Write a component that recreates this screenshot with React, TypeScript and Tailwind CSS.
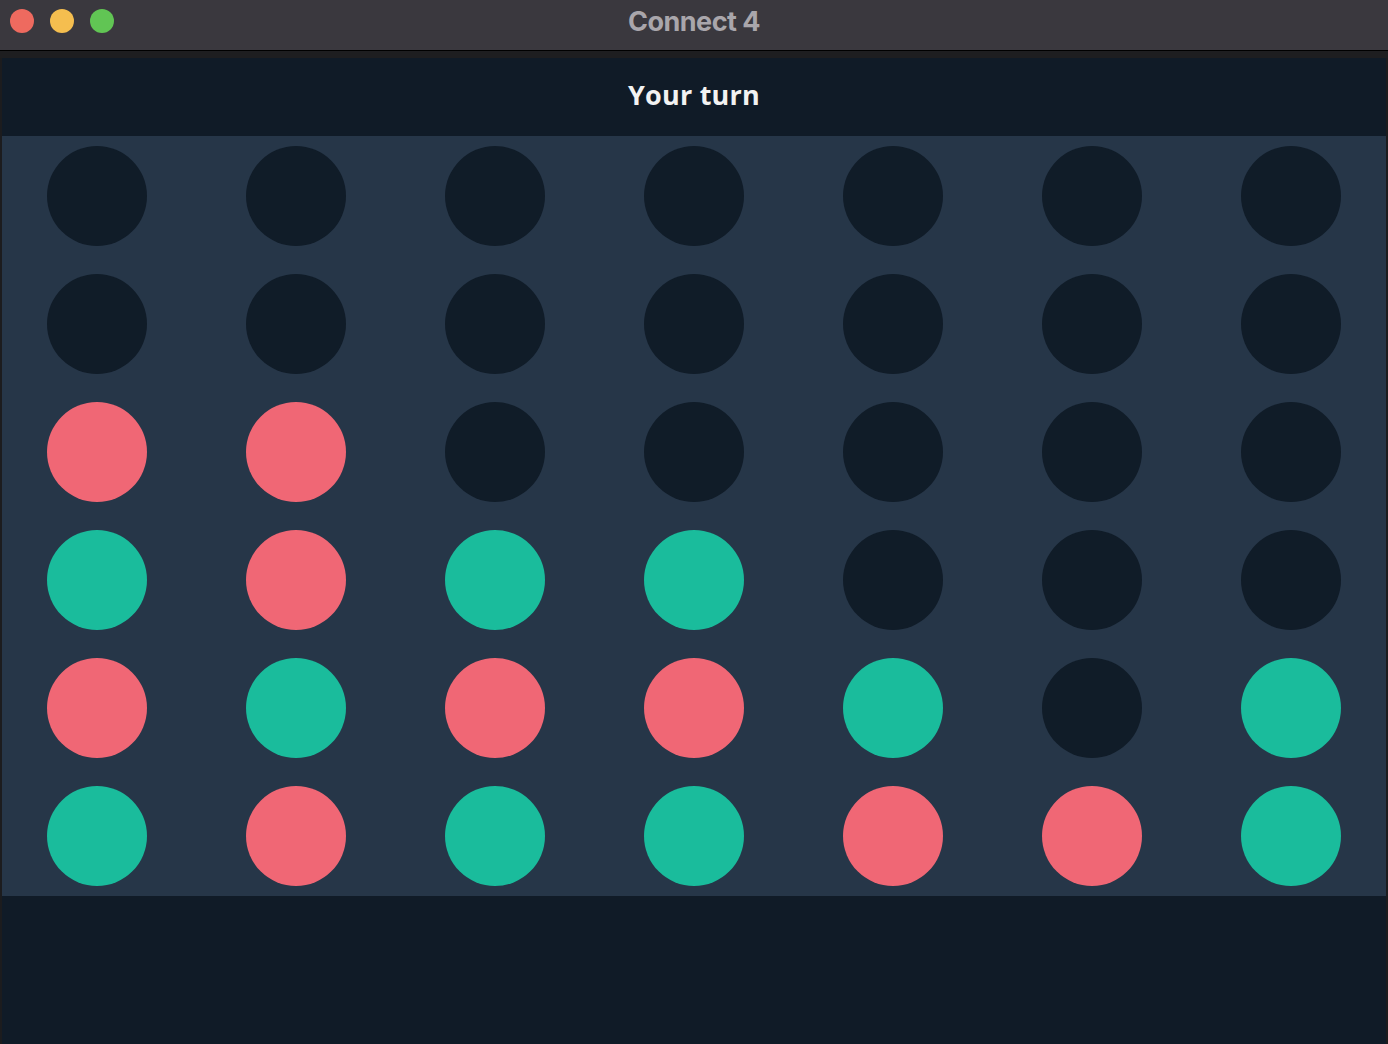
import React from "react";

const board: string[] = [
  "EEEEEEE",
  "EEEEEEE",
  "RREEEEE",
  "TRTTEEE",
  "RTRRTET",
  "TRTTRRT",
];

function Slot({ v }: { v: string }) {
  const cls =
    v === "R" ? "bg-[#f06775]" : v === "T" ? "bg-[#1abc9c]" : "bg-[#101c28]";
  return <div className={`w-[100px] h-[100px] rounded-full ${cls}`} />;
}

export default function App() {
  return (
    <div className="w-[1388px] h-[1044px] flex flex-col bg-[#1c1c1e] overflow-hidden">
      <div className="h-[50px] shrink-0 bg-[#3a383e] relative">
        <div className="flex gap-4 pl-[10px] pt-[9px]">
          <div className="w-6 h-6 rounded-full bg-[#ee6a5f]" />
          <div className="w-6 h-6 rounded-full bg-[#f5be4f]" />
          <div className="w-6 h-6 rounded-full bg-[#61c554]" />
        </div>
        <div
          className="absolute left-0 right-0 top-0 h-[42px] flex items-center justify-center text-[27px] leading-none font-bold text-[#a9a6ab] tracking-[-0.5px]"
          style={{ fontFamily: "Inter, 'Liberation Sans', sans-serif" }}
        >
          Connect 4
        </div>
      </div>
      <div className="h-px bg-black shrink-0" />
      <div className="h-[7px] bg-[#1e1e20] shrink-0" />
      <div className="flex-1 flex flex-col mx-[2px] bg-[#101b27]">
        <div
          className="h-[78px] shrink-0 flex items-center justify-center pb-[6px] text-[27px] leading-none font-bold text-[#f2f2f2] tracking-[0.2px]"
          style={{ fontFamily: "'Open Sans', 'Noto Sans', sans-serif" }}
        >
          Your turn
        </div>
        <div className="bg-[#263648] py-[10px] px-[45px] flex flex-col gap-[28px]">
          {board.map((row, r) => (
            <div key={r} className="flex justify-between">
              {row.split("").map((v, c) => (
                <Slot key={c} v={v} />
              ))}
            </div>
          ))}
        </div>
        <div className="flex-1" />
      </div>
    </div>
  );
}
